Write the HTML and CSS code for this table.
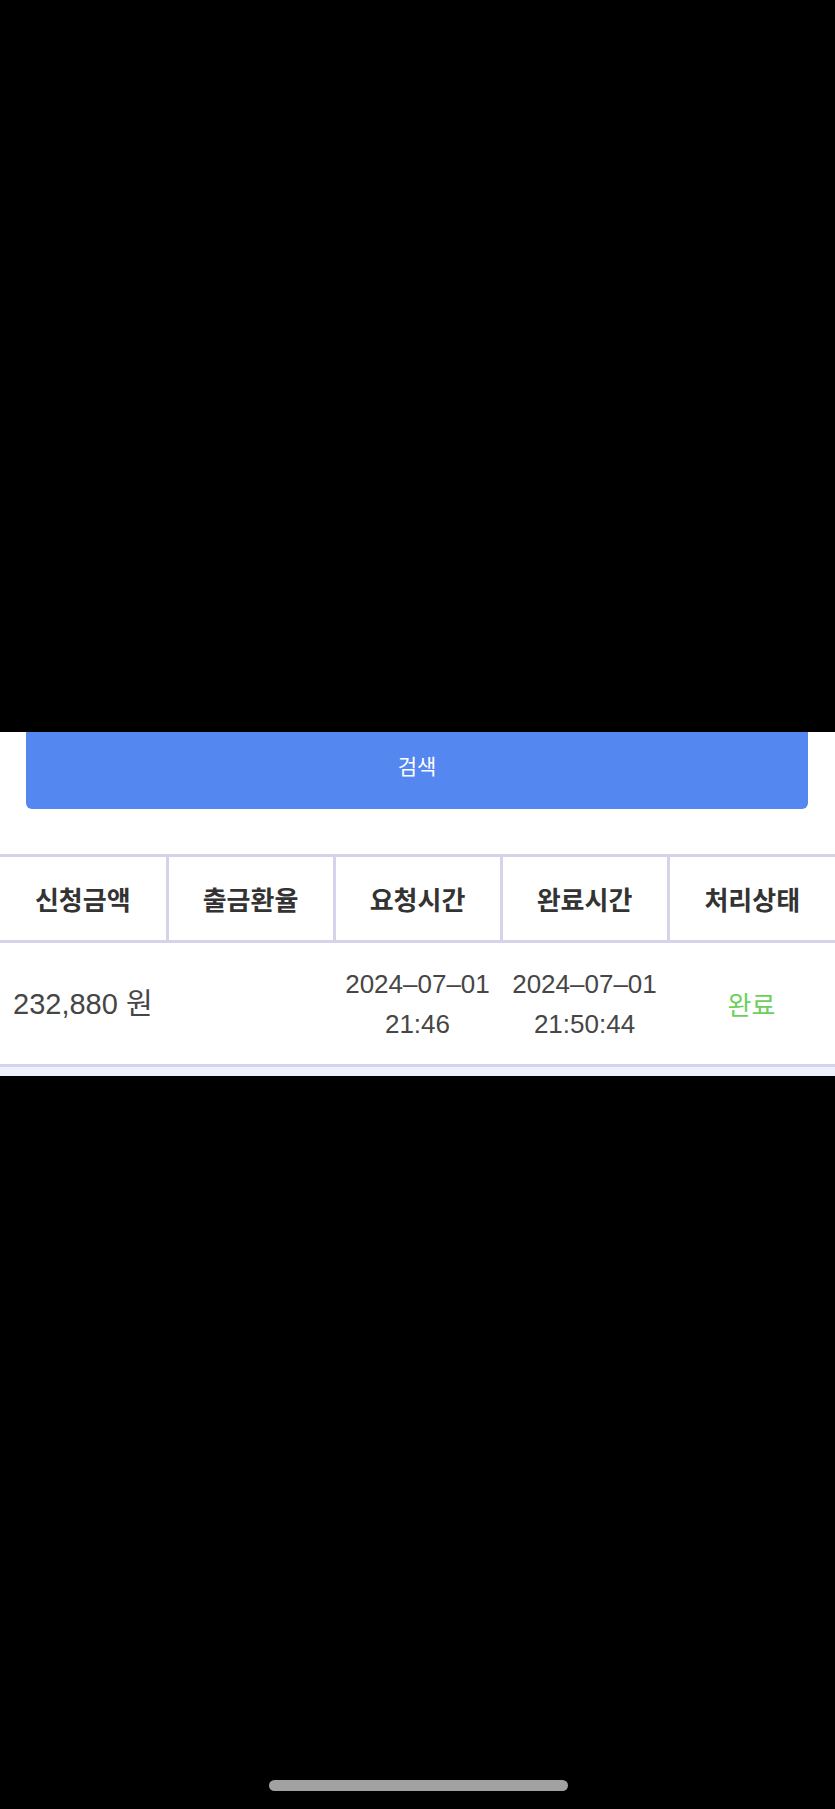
FILE: index.html
```html
<!DOCTYPE html>
<html lang="ko">
<head>
    <meta charset="UTF-8">
    <meta name="viewport" content="width=device-width, initial-scale=1.0">
    <title>출금 내역</title>
    <link rel="stylesheet" href="styles.css">
</head>
<body>
    <div class="screen">
        <div class="shade"></div>

        <div class="panel">
            <div class="search-wrap">
                <button type="button" class="search-btn">검색</button>
            </div>

            <table class="history">
                <thead>
                    <tr>
                        <th>신청금액</th>
                        <th>출금환율</th>
                        <th>요청시간</th>
                        <th>완료시간</th>
                        <th>처리상태</th>
                    </tr>
                </thead>
                <tbody>
                    <tr>
                        <td class="amount">232,880 원</td>
                        <td></td>
                        <td>2024–07–01<br>21:46</td>
                        <td>2024–07–01<br>21:50:44</td>
                        <td class="status done">완료</td>
                    </tr>
                </tbody>
            </table>
            <div class="table-foot"></div>
        </div>

        <div class="filler"></div>

        <!-- home indicator -->
        <div class="home-bar-wrap">
            <div class="home-bar"></div>
        </div>
    </div>
</body>
</html>
```

FILE: styles.css
```css
/* General */
body {
    margin: 0;
    padding: 0;
    background: #000;
    font-family: 'Liberation Sans', 'Noto Sans CJK KR', sans-serif;
}

.screen {
    width: 835px;
    height: 1809px;
    display: flex;
    flex-direction: column;
    background: #000;
}

.shade {
    height: 732px;
    flex-shrink: 0;
}

/* Visible part of the page */
.panel {
    height: 344px;
    flex-shrink: 0;
    overflow: hidden;
    background: #fff;
}

.search-wrap {
    padding: 0 27px 0 26px;
}

.search-btn {
    display: block;
    width: 100%;
    height: 88px;
    margin-top: -11px;
    border: none;
    border-radius: 6px;
    background-color: #5487ef;
    color: #fff;
    font-family: 'Noto Sans CJK KR', sans-serif;
    font-size: 21px;
    cursor: pointer;
}

/* History table */
.history {
    width: 100%;
    margin-top: 45px;
    border-collapse: collapse;
    table-layout: fixed;
}

.history th {
    height: 83px;
    padding: 0;
    border-top: 3px solid #d4d3ea;
    border-bottom: 3px solid #d4d3ea;
    border-left: 3px solid #d4d3ea;
    color: #333;
    font-family: 'Noto Sans CJK KR', sans-serif;
    font-size: 26px;
    font-weight: bold;
    text-align: center;
}

.history th:first-child {
    border-left: none;
}

.history td {
    height: 121px;
    padding: 0;
    border-bottom: 3px solid #d4d3ea;
    color: #464646;
    font-size: 26px;
    line-height: 40px;
    text-align: center;
}

.history td.amount {
    text-align: left;
    padding-left: 13px;
    font-size: 29px;
    white-space: nowrap;
}

.status {
    font-family: 'Noto Sans CJK KR', sans-serif;
    font-size: 22px;
}

.history td.status.done {
    color: #6ccf5c;
}

.table-foot {
    height: 9px;
    background: #eef0fc;
}

.filler {
    flex: 1;
}

/* Home indicator */
.home-bar-wrap {
    display: flex;
    justify-content: center;
    padding: 0 0 18px 0;
}

.home-bar {
    width: 299px;
    height: 11px;
    margin-left: 1px;
    border-radius: 6px;
    background: #a1a1a1;
}
```
